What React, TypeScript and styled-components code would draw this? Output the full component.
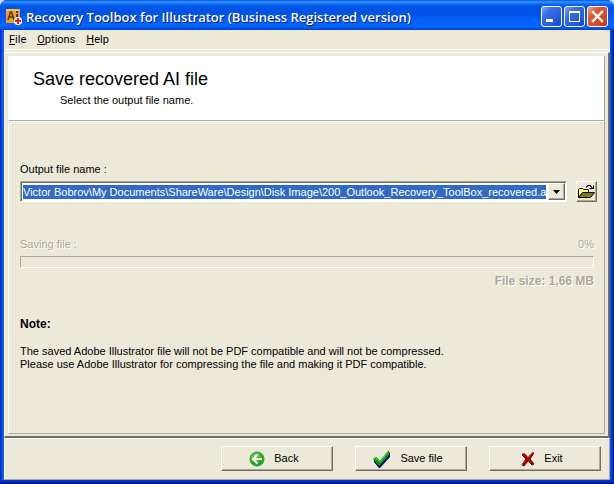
import React from "react";
import styled, { createGlobalStyle } from "styled-components";

const face = "#ece9d8";
const shade = "#aca899";
const dark = "#716f64";

const GlobalStyle = createGlobalStyle`
  * { box-sizing: border-box; }
  body { margin: 0; background: #d6dff7; }
  button, input { font: inherit; }
`;

const Window = styled.div`
  display: flex;
  flex-direction: column;
  min-height: 100vh;
  border-radius: 7px 7px 0 0;
  overflow: hidden;
  background: #0831d9;
  font: 11px/13px "Liberation Sans", Arial, sans-serif;
  color: #000;
`;

const TitleBar = styled.header`
  display: flex;
  align-items: center;
  height: 30px;
  padding: 3px 6px 0;
  background: linear-gradient(
    #0058e6 0px, #3a93ff 2px, #0a6cf5 4px, #0054e3 7px, #0055e5 14px,
    #0062fb 21px, #0066ff 26px, #0058e8 28px, #003dcb 30px
  );
`;

const Title = styled.h1`
  flex: 1;
  margin: 0 0 0 4px;
  font: 600 13px/20px "Open Sans", sans-serif;
  color: #fff;
  text-shadow: 1px 1px #0a1883;
  white-space: nowrap;
`;

const Captions = styled.div`
  display: flex;
  gap: 2px;
`;

const CaptionButton = styled.button<{ $close?: boolean }>`
  display: block;
  width: 21px;
  height: 21px;
  padding: 0;
  border: 1px solid #fff;
  border-radius: 3px;
  background: ${(p) =>
    p.$close
      ? "linear-gradient(135deg, #f0a48a 0%, #e0593a 30%, #d8441c 75%, #b93410 100%)"
      : "linear-gradient(135deg, #7fa5f5 0%, #3b6ee8 30%, #2458de 75%, #1944b8 100%)"};
  svg { display: block; }
`;

const Frame = styled.div`
  flex: 1;
  display: flex;
  flex-direction: column;
  padding: 0 4px 4px;
  background: linear-gradient(90deg, #0019cf 0px, #0831d9 1px, #166aee 3px, #0855dd 4px,
    #0855dd calc(100% - 4px), #0048f1 calc(100% - 3px), #001ea0 calc(100% - 1px), #00138c 100%);
  box-shadow: inset 0 -2px #001590, inset 0 -4px #0036c8;
`;

const Menu = styled.nav`
  display: flex;
  gap: 11px;
  height: 20px;
  padding: 3px 5px 0;
  background: ${face};
  border-bottom: 1px solid #fff;
  font: 11px/13px Roboto, sans-serif;
`;

const MenuItem = styled.button`
  height: 13px;
  padding: 0;
  border: 0;
  background: none;
  color: #000;
`;

const Wizard = styled.main`
  flex: 1;
  display: flex;
  flex-direction: column;
  margin-top: 2px;
  padding: 3px 3px 2px;
  background: ${face};
  border: solid;
  border-width: 1px 2px 2px 1px;
  border-color: #fff ${dark} ${dark} #fff;
  box-shadow: 0 -2px ${face};
`;

const Page = styled.section`
  flex: 1;
  display: flex;
  flex-direction: column;
  border: solid;
  border-width: 0 1px 1px;
  border-color: #fff ${shade} ${shade} #fff;
`;

const PageHead = styled.div`
  height: 65px;
  padding: 13px 24px 0;
  background: #fff;
  border-bottom: 1px solid ${shade};
`;

const Heading = styled.h2`
  margin: 0;
  font: 18px/20px "Liberation Sans", Arial, sans-serif;
`;

const SubHeading = styled.p`
  margin: 5px 0 0 27px;
`;

const Form = styled.form`
  flex: 1;
  padding: 41px 7px 0 11px;
  border-top: 1px solid #fff;
`;

const FileRow = styled.div`
  display: flex;
  gap: 9px;
  margin-top: 5px;
`;

const Combo = styled.div`
  flex: 1;
  display: flex;
  min-width: 0;
  height: 21px;
  padding: 1px;
  background: #fff;
  border: 1px solid;
  border-color: ${shade} #fff #fff ${shade};
  box-shadow: inset 1px 1px ${dark};
`;

const PathInput = styled.input`
  flex: 1;
  min-width: 0;
  height: 14px;
  margin: 2px 2px 0 1px;
  padding: 0;
  border: 0;
  outline: 0;
  background: #316ac5;
  color: #fff;
`;

const Raised = styled.button`
  display: flex;
  align-items: center;
  justify-content: center;
  padding: 0;
  background: ${face};
  color: #000;
  border: 1px solid;
  border-color: #fff ${dark} ${dark} #fff;
  box-shadow: inset -1px -1px ${shade};
`;

const DropButton = styled(Raised)`
  width: 17px;
  height: 17px;
`;

const OpenButton = styled(Raised)`
  width: 21px;
  height: 21px;
`;

const Progress = styled.div`
  margin: 36px 3px 0 0;
  color: ${shade};
  text-shadow: 1px 1px #fff;
`;

const ProgressLabels = styled.div`
  display: flex;
  justify-content: space-between;
`;

const Track = styled.div`
  height: 12px;
  margin-top: 5px;
  border: 1px solid;
  border-color: ${shade} #fff #fff ${shade};
`;

const FileSize = styled.p`
  margin: 7px 0 0;
  text-align: right;
  font: bold 12px/13px "Liberation Sans", Arial, sans-serif;
`;

const NoteTitle = styled.h3`
  margin: 30px 0 14px;
  font: bold 12px/13px "Liberation Sans", Arial, sans-serif;
`;

const Note = styled.p`
  margin: 0;
`;

const Footer = styled.footer`
  display: flex;
  justify-content: flex-end;
  gap: 22px;
  height: 42px;
  padding: 7px 8px 0;
  background: ${face};
  border: solid;
  border-width: 1px;
  border-color: #fff ${shade} ${shade} #fff;
`;

const ActionButton = styled(Raised)`
  gap: 9px;
  width: 112px;
  height: 25px;
  padding-right: 6px;
`;

const AppIcon = () => (
  <svg width="16" height="16" viewBox="0 0 16 16" aria-hidden="true">
    <rect width="14" height="14" fill="#f39b20" />
    <path d="M0 0h14v2H0z" fill="#f8bd55" />
    <path d="M2 11 4.500 3h1L8 11M3 8h4" fill="none" stroke="#4a3518" strokeWidth="1.500" />
    <path d="M11 5v5M11 2v2" fill="none" stroke="#4a3518" strokeWidth="2" />
    <circle cx="12" cy="12" r="4" fill="#fff" />
    <path d="M12 9v6M9 12h6" stroke="#e02020" strokeWidth="2" />
  </svg>
);

const FolderIcon = () => (
  <svg width="17" height="15" viewBox="0 0 17 15" aria-hidden="true">
    <path d="M.5 13.500v-8l1-1h3l1 1h5v3" fill="#ffff80" stroke="#000" />
    <path d="m.5 13.500 4-5h12l-4 5z" fill="#808000" stroke="#000" />
    <path d="M8.500 3.500v-1h1v-1h3v1h1v1h1M11.500 4.500h4v-3" fill="none" stroke="#000" />
  </svg>
);

const BackIcon = () => (
  <svg width="16" height="16" viewBox="0 0 16 16" aria-hidden="true">
    <defs>
      <radialGradient id="backFill" cx="40%" cy="30%">
        <stop offset="0" stopColor="#77d45c" />
        <stop offset="1" stopColor="#25a51c" />
      </radialGradient>
    </defs>
    <circle cx="8" cy="8" r="7" fill="url(#backFill)" stroke="#2b9f24" />
    <path d="M8.500 3.500 4 8l4.500 4.500M4.500 8H13" fill="none" stroke="#fff" strokeWidth="2.200" />
  </svg>
);

const CheckIcon = () => (
  <svg width="18" height="20" viewBox="0 0 18 20" aria-hidden="true">
    <path d="M1 11 4 9l3 4L16 3l1 1v4L7 19H6l-5-6z" fill="#000060" />
    <path d="M0 10 3 8l4 4L16 1v5L6 17z" fill="#078512" />
    <path d="m1 10 2-1 4 4L15 3" fill="none" stroke="#20d030" strokeWidth="1.500" />
    <path d="m2 12 4 4L16 5" fill="none" stroke="#16a822" strokeWidth="1" />
  </svg>
);

const CrossIcon = () => (
  <svg width="14" height="16" viewBox="0 0 14 16" aria-hidden="true">
    <path d="M2 3h2l3 4 4-5h2L9 8l4 5-2 1-4-4-4 5-2-1 4-6-4-4z" fill="#8b0000" stroke="#8b0000" />
    <path d="M1 3h3l3 4 4-5h2M1 14l4-6" fill="none" stroke="#e01818" />
  </svg>
);

export default function App() {
  return (
    <>
      <GlobalStyle />
      <Window>
        <TitleBar>
          <AppIcon />
          <Title>Recovery Toolbox for Illustrator (Business Registered version)</Title>
          <Captions>
            <CaptionButton aria-label="Minimize">
              <svg width="19" height="19"><path d="M4 12h7v3H4z" fill="#fff" /></svg>
            </CaptionButton>
            <CaptionButton aria-label="Maximize">
              <svg width="19" height="19">
                <path d="M4 5h11" stroke="#fff" strokeWidth="2" />
                <path d="M4.500 5v9.500h10V5" fill="none" stroke="#fff" />
              </svg>
            </CaptionButton>
            <CaptionButton $close aria-label="Close">
              <svg width="19" height="19">
                <path d="m5 5 9 9m0-9-9 9" stroke="#fff" strokeWidth="2.400" strokeLinecap="square" />
              </svg>
            </CaptionButton>
          </Captions>
        </TitleBar>
        <Frame>
          <Menu>
            <MenuItem><u>F</u>ile</MenuItem>
            <MenuItem><u>O</u>ptions</MenuItem>
            <MenuItem><u>H</u>elp</MenuItem>
          </Menu>
          <Wizard>
            <Page>
              <PageHead>
                <Heading>Save recovered AI file</Heading>
                <SubHeading>Select the output file name.</SubHeading>
              </PageHead>
              <Form onSubmit={(e) => e.preventDefault()}>
                <label htmlFor="output">Output file name :</label>
                <FileRow>
                  <Combo>
                    <PathInput
                      id="output"
                      defaultValue="Victor Bobrov\My Documents\ShareWare\Design\Disk Image\200_Outlook_Recovery_ToolBox_recovered.ai"
                    />
                    <DropButton type="button" aria-label="Show recent files">
                      <svg width="7" height="4"><path d="M0 0h7L3.500 4z" fill="#000" /></svg>
                    </DropButton>
                  </Combo>
                  <OpenButton type="button" aria-label="Browse"><FolderIcon /></OpenButton>
                </FileRow>
                <Progress>
                  <ProgressLabels>
                    <span id="saving">Saving file :</span>
                    <span>0%</span>
                  </ProgressLabels>
                  <Track role="progressbar" aria-labelledby="saving" aria-valuenow={0} />
                  <FileSize>File size: 1,66 MB</FileSize>
                </Progress>
                <NoteTitle>Note:</NoteTitle>
                <Note>
                  The saved Adobe Illustrator file will not be PDF compatible and will not be compressed.
                  <br />
                  Please use Adobe Illustrator for compressing the file and making it PDF compatible.
                </Note>
              </Form>
            </Page>
          </Wizard>
          <Footer>
            <ActionButton><BackIcon />Back</ActionButton>
            <ActionButton><CheckIcon />Save file</ActionButton>
            <ActionButton><CrossIcon />Exit</ActionButton>
          </Footer>
        </Frame>
      </Window>
    </>
  );
}
